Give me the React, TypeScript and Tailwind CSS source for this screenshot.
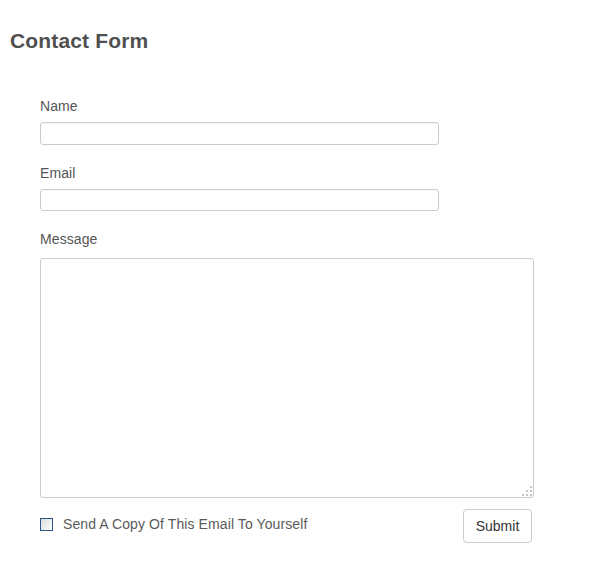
import { useState } from "react";

// little dotted grip the old browsers drew in the textarea corner
function Grip() {
  const dots = [
    [8, 0],
    [4, 4],
    [8, 4],
    [0, 8],
    [4, 8],
    [8, 8],
  ];
  return (
    <svg width="10" height="10" viewBox="0 0 10 10" className="pointer-events-none absolute bottom-[2px] right-[2px]">
      {dots.map(([x, y]) => (
        <rect key={`${x}-${y}`} x={x} y={y} width="2" height="2" fill="#c4c4c4" />
      ))}
    </svg>
  );
}

export default function App() {
  const [copy, setCopy] = useState(false);

  return (
    <div className="min-h-[568px] w-[597px] bg-white font-['Liberation_Sans',Arial,sans-serif] text-[#555]">
      <h1 className="px-[10px] pt-[29px] text-[21px] font-bold leading-[24px] tracking-[0.15px] text-[#505050]">
        Contact Form
      </h1>

      <form className="flex flex-col pl-[40px] pt-[44px]" onSubmit={(e) => e.preventDefault()}>
        {/* name */}
        <label className="text-[14px] leading-[18px] tracking-[0.1px]">Name</label>
        <input
          type="text"
          className="mt-[7px] h-[23px] w-[399px] rounded-[3px] border border-[#ccc] bg-white px-2 text-[14px] shadow-[inset_0_1px_1px_rgba(0,0,0,0.04)] outline-none"
        />

        {/* email */}
        <label className="mt-[19px] text-[14px] leading-[18px] tracking-[0.1px]">Email</label>
        <input
          type="email"
          className="mt-[7px] h-[22px] w-[399px] rounded-[3px] border border-[#ccc] bg-white px-2 text-[14px] shadow-[inset_0_1px_1px_rgba(0,0,0,0.04)] outline-none"
        />

        {/* message */}
        <label className="mt-[19px] text-[14px] leading-[18px] tracking-[0.1px]">Message</label>
        <div className="relative mt-[10px] h-[240px] w-[494px]">
          <textarea className="block h-full w-full resize-none rounded-[3px] border border-[#ccc] bg-white p-2 text-[14px] outline-none" />
          <Grip />
        </div>

        <div className="mt-[11px] flex w-[492px] items-start justify-between">
          <label className="mt-[7px] flex cursor-pointer items-center gap-[10px]" onClick={() => setCopy(!copy)}>
            <span className="flex h-[13px] w-[13px] items-center justify-center border border-[#2a5585] bg-gradient-to-br from-[#dcdcdc] to-white">
              {copy && <span className="h-[7px] w-[7px] bg-[#2a5585]" />}
            </span>
            <span className="text-[14px] leading-[16px] tracking-[0.1px] text-[#5a5a5a]">
              Send A Copy Of This Email To Yourself
            </span>
          </label>
          <button
            type="submit"
            className="h-[34px] w-[69px] rounded-[4px] border border-[#ccc] bg-white text-[14px] text-[#333]"
          >
            Submit
          </button>
        </div>
      </form>
    </div>
  );
}
